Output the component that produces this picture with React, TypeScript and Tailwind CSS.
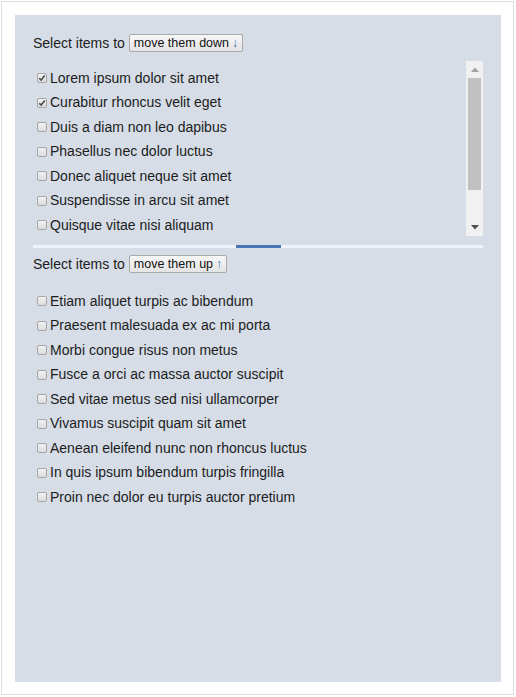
import React from "react";

const TOP_ITEMS: { label: string; checked: boolean }[] = [
  { label: "Lorem ipsum dolor sit amet", checked: true },
  { label: "Curabitur rhoncus velit eget", checked: true },
  { label: "Duis a diam non leo dapibus", checked: false },
  { label: "Phasellus nec dolor luctus", checked: false },
  { label: "Donec aliquet neque sit amet", checked: false },
  { label: "Suspendisse in arcu sit amet", checked: false },
  { label: "Quisque vitae nisi aliquam", checked: false },
];

const BOTTOM_ITEMS: string[] = [
  "Etiam aliquet turpis ac bibendum",
  "Praesent malesuada ex ac mi porta",
  "Morbi congue risus non metus",
  "Fusce a orci ac massa auctor suscipit",
  "Sed vitae metus sed nisi ullamcorper",
  "Vivamus suscipit quam sit amet",
  "Aenean eleifend nunc non rhoncus luctus",
  "In quis ipsum bibendum turpis fringilla",
  "Proin nec dolor eu turpis auctor pretium",
];

function Checkbox({ checked }: { checked: boolean }) {
  return (
    <span className="flex h-[10px] w-[10px] shrink-0 items-center justify-center rounded-[2px] border border-[#a6a6a6] bg-gradient-to-b from-[#f2f2f2] to-[#dcdcdc]">
      {checked && (
        <svg width="8" height="8" viewBox="0 0 8 8">
          <path
            d="M1.2 4.2 L3.1 6.1 L6.8 1.6"
            fill="none"
            stroke="#4a4a4a"
            strokeWidth="1.6"
          />
        </svg>
      )}
    </span>
  );
}

function Item({ label, checked }: { label: string; checked: boolean }) {
  return (
    <div className="flex h-[24.5px] items-center gap-[3px] pl-[4px]">
      <Checkbox checked={checked} />
      <span className="whitespace-nowrap">{label}</span>
    </div>
  );
}

function Header({ label, arrow }: { label: string; arrow: string }) {
  return (
    <div className="flex h-[18px] items-center gap-[4px]">
      <span>Select items to</span>
      <button
        type="button"
        className="flex h-[18px] items-center rounded-[2px] border border-[#a9a9a9] bg-gradient-to-b from-[#f7f7f7] to-[#e4e4e4] px-[4px] text-[12.5px] leading-none text-[#111]"
      >
        {label}
        <span className="ml-[3px] text-[#4f7cab]">{arrow}</span>
      </button>
    </div>
  );
}

function Scrollbar() {
  return (
    <div className="flex w-[17px] shrink-0 flex-col items-center bg-[#f1f1f1]">
      <div className="flex h-[17px] w-full items-center justify-center">
        <svg width="8" height="5" viewBox="0 0 8 5">
          <path d="M0 5 L4 0.5 L8 5 Z" fill="#a3a3a3" />
        </svg>
      </div>
      <div className="h-[112px] w-[13px] bg-[#c1c1c1]" />
      <div className="flex-1" />
      <div className="flex h-[17px] w-full items-center justify-center">
        <svg width="8" height="5" viewBox="0 0 8 5">
          <path d="M0 0 L8 0 L4 4.5 Z" fill="#505050" />
        </svg>
      </div>
    </div>
  );
}

export default function App() {
  return (
    <div className="ml-px mt-px h-[694px] w-[513px] border border-[#dcdcdc] bg-white p-[13px]">
      <div
        className="h-[667px] w-[486px] bg-[#d6dde7] px-[18px] pt-[19px] text-[14px] text-[#1c1c1c]"
        style={{ fontFamily: '"Liberation Sans", Arial, sans-serif' }}
      >
        {/* Top list */}
        <Header label="move them down" arrow="↓" />
        <div className="mt-[9px] flex h-[175px]">
          <div className="flex-1 overflow-hidden pt-[5px]">
            {TOP_ITEMS.map((it) => (
              <Item key={it.label} label={it.label} checked={it.checked} />
            ))}
          </div>
          <Scrollbar />
        </div>

        {/* Splitter */}
        <div className="mt-[9px] flex h-[3px] justify-center bg-[#eef2f9]">
          <div className="h-full w-[45px] bg-[#4a74b3]" />
        </div>

        {/* Bottom list */}
        <div className="mt-[7px]">
          <Header label="move them up" arrow="↑" />
        </div>
        <div className="mt-[11px] pt-[5px]">
          {BOTTOM_ITEMS.map((label) => (
            <Item key={label} label={label} checked={false} />
          ))}
        </div>
      </div>
    </div>
  );
}
